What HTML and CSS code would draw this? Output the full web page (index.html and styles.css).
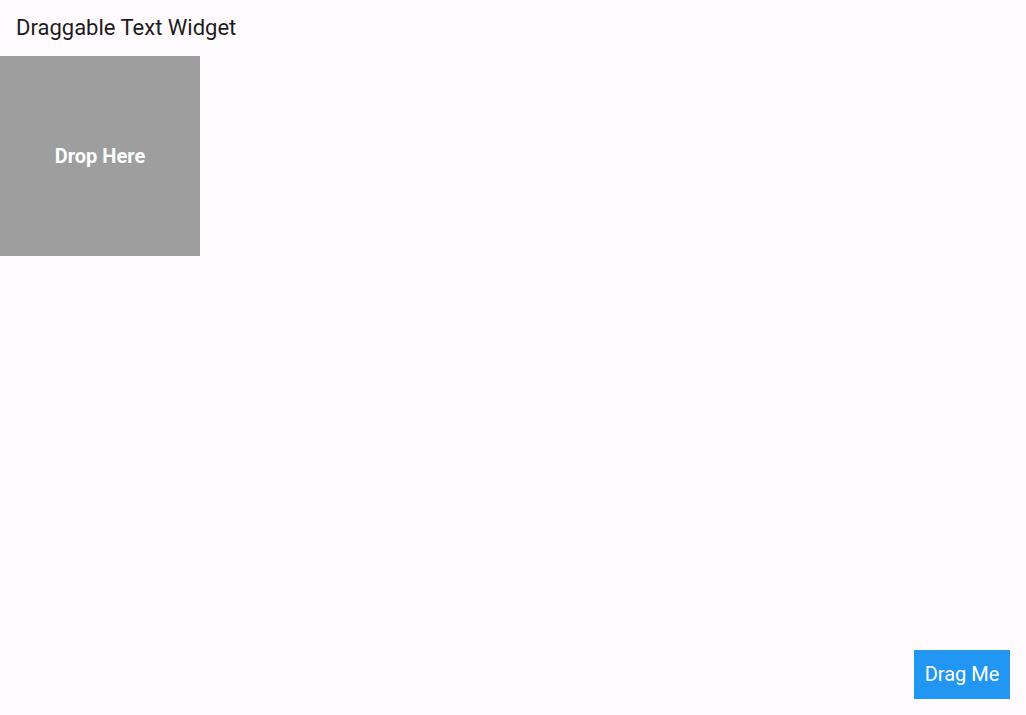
FILE: index.html
```html
<!DOCTYPE html>
<html>
<head>
<meta charset="utf-8">
<link rel="stylesheet" href="styles.css">
</head>
<body>
<div class="app">
  <header class="app-bar"><span class="title">Draggable Text Widget</span></header>
  <main class="content">
    <div class="drop-target"><span>Drop Here</span></div>
    <div class="draggable"><span>Drag Me</span></div>
  </main>
</div>
</body>
</html>
```
FILE: styles.css
```css
html, body {
  margin: 0;
  padding: 0;
  height: 100%;
}
body {
  background: #fffbfe;
  font-family: Roboto, "Liberation Sans", sans-serif;
}
.app {
  display: flex;
  flex-direction: column;
  height: 100%;
}
.app-bar {
  height: 56px;
  display: flex;
  align-items: center;
  padding: 0 16px 2px;
  box-sizing: border-box;
  flex-shrink: 0;
}
.title {
  font-size: 22px;
  color: #1d1b20;
  font-weight: 400;
}
.content {
  flex: 1;
  display: flex;
  flex-direction: column;
}
.drop-target {
  width: 200px;
  height: 200px;
  background: #9e9e9e;
  display: flex;
  align-items: center;
  justify-content: center;
  color: #fff;
  font-size: 20px;
  font-weight: 700;
}
.draggable {
  margin-top: auto;
  align-self: flex-end;
  margin-right: 16px;
  margin-bottom: 16px;
  width: 96px;
  height: 49px;
  padding-bottom: 2px;
  box-sizing: border-box;
  background: #2196f3;
  color: #fff;
  font-size: 20px;
  display: flex;
  align-items: center;
  justify-content: center;
}
```
